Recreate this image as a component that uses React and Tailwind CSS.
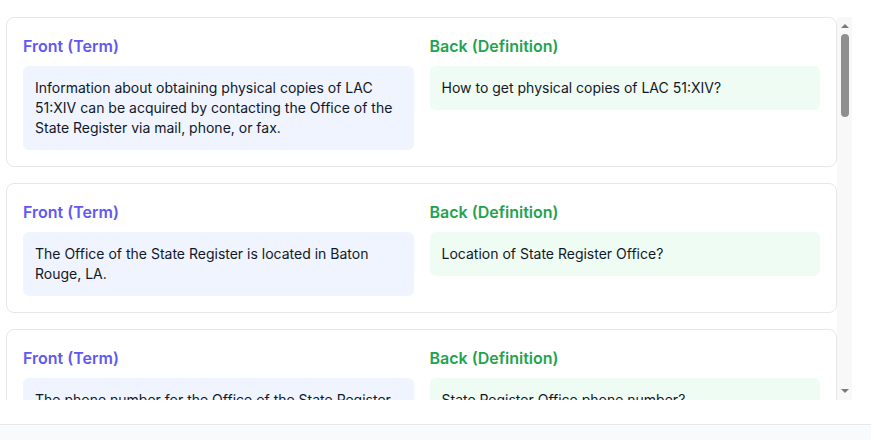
import React from "react";

const cards = [
  {
    front:
      "Information about obtaining physical copies of LAC 51:XIV can be acquired by contacting the Office of the State Register via mail, phone, or fax.",
    back: "How to get physical copies of LAC 51:XIV?",
  },
  {
    front: "The Office of the State Register is located in Baton Rouge, LA.",
    back: "Location of State Register Office?",
  },
  {
    front: "The phone number for the Office of the State Register is (225) 342-5015.",
    back: "State Register Office phone number?",
  },
  {
    front: "The fax number for the Office of the State Register is (225) 342-0284.",
    back: "State Register Office fax number?",
  },
  {
    front:
      "The mailing address of the Office of the State Register is P.O. Box 94095, Baton Rouge, LA 70804-9095.",
    back: "State Register Office mailing address?",
  },
  {
    front: "LAC 51:XIV contains the Louisiana Plumbing Code provisions of the Sanitary Code.",
    back: "What does LAC 51:XIV contain?",
  },
  {
    front: "The Louisiana Administrative Code is published by the Office of the State Register.",
    back: "Who publishes the Louisiana Administrative Code?",
  },
  {
    front: "Copies may be purchased for a fee set by the Office of the State Register.",
    back: "Is there a fee for copies?",
  },
  {
    front: "Electronic versions of the code are available on the Office of the State Register website.",
    back: "Where to find electronic versions?",
  },
  {
    front: "Requests should include the title and part number of the code being requested.",
    back: "What should a request include?",
  },
];

function Card({ front, back }) {
  return (
    <div className="rounded-lg border border-[#e5e7eb] bg-white p-4">
      <div className="grid grid-cols-2 gap-4">
        <div>
          <h3 className="mb-2 text-base leading-6 font-semibold text-[#6157f2]">Front (Term)</h3>
          <div className="rounded-md bg-[#eff4ff] px-3 py-3 text-sm leading-5 text-[#111827]">{front}</div>
        </div>
        <div>
          <h3 className="mb-2 text-base leading-6 font-semibold text-[#1fa34f]">Back (Definition)</h3>
          <div className="rounded-md bg-[#effcf4] px-3 py-3 text-sm leading-5 text-[#111827]">{back}</div>
        </div>
      </div>
    </div>
  );
}

function ScrollBar() {
  return (
    <div className="flex h-full w-[15px] shrink-0 flex-col items-center bg-[#f8f8f8]">
      <div className="mt-[7px] h-0 w-0 border-x-[4px] border-b-[4px] border-x-transparent border-b-[#7a7a7a]" />
      <div className="mt-[6px] h-[83px] w-2 rounded-full bg-[#8f8f8f]" />
      <div className="flex-1" />
      <div className="mb-[7px] h-0 w-0 border-x-[4px] border-t-[4px] border-x-transparent border-t-[#7a7a7a]" />
    </div>
  );
}

export default function App() {
  return (
    <div
      className="flex h-[440px] w-[871px] flex-col overflow-hidden bg-white"
      style={{ fontFamily: "Inter, 'Noto Sans', sans-serif" }}
    >
      <div className="h-[17px] shrink-0" />
      <div className="flex h-[383px] w-[852px] shrink-0">
        <div className="h-full w-[837px] shrink-0 overflow-y-auto pl-1.5 [scrollbar-width:none]">
          <div className="flex flex-col gap-4">
            {cards.map((c, i) => (
              <Card key={i} front={c.front} back={c.back} />
            ))}
          </div>
        </div>
        <ScrollBar />
      </div>
      <div className="h-6 shrink-0 bg-white" />
      <div className="flex-1 border-t border-[#e5e7eb] bg-[#f9fafb]" />
    </div>
  );
}
